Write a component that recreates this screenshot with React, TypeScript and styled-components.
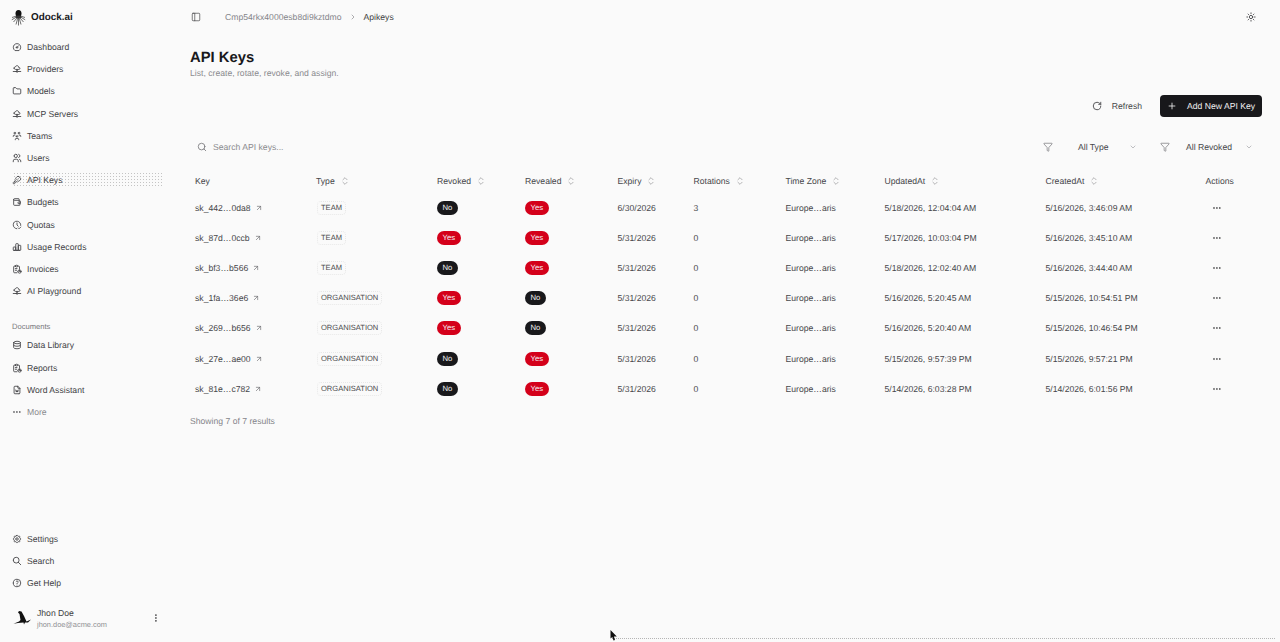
import React from "react";
import styled, { createGlobalStyle } from "styled-components";
import { ArrowUpRight, ChevronDown, ChevronRight, ChevronsUpDown, Funnel, PanelLeft, Plus, RotateCw, Search, Sun } from "lucide-react";
import {
  TbCloudDataConnection, TbDashboard, TbFolder, TbUsersGroup, TbUsers, TbKey, TbWallet, TbClockCheck,
  TbChartBar, TbReport, TbDatabase, TbFileWord, TbDots, TbDotsVertical, TbSettings, TbSearch, TbHelp,
} from "react-icons/tb";

const Global = createGlobalStyle`
  html, body { margin: 0; padding: 0; height: 100%; background: #fafafa; }
  body { font-family: "Liberation Sans", Arial, sans-serif; color: #3f3f42; overflow: hidden; text-rendering: geometricPrecision; }
  #root { height: 100%; }
`;

const Page = styled.div`
  position: relative;
  display: flex;
  height: 642px;
  width: 1280px;
  overflow: hidden;
  background: #fafafa;
`;

const Sidebar = styled.aside`
  width: 190px;
  flex: none;
  display: flex;
  flex-direction: column;
  padding: 0 27px 0 10px;
  box-sizing: border-box;
`;

const Brand = styled.div`
  height: 34px;
  display: flex;
  align-items: center;
  gap: 5px;
  padding-left: 1px;
  font-size: 9.9px;
  font-weight: 700;
  color: #18181b;
  margin-bottom: 2px;
`;

const NavList = styled.nav`
  display: flex;
  flex-direction: column;
`;

const BottomNav = styled(NavList)`
  margin-top: auto;
`;

const NavItem = styled.div<{ $active?: boolean; $muted?: boolean }>`
  height: 22.2px;
  box-sizing: border-box;
  padding: 4px 0 4px 2px;
  display: flex;
  align-items: center;
  gap: 5px;
  font-size: 8.65px;
  color: ${(p) => (p.$muted ? "#8b8b8f" : "#434346")};
  background-image: ${(p) => (p.$active ? "radial-gradient(circle, #c4c4c4 0.5px, transparent 0.65px)" : "none")};
  background-size: 3px 3px;
  background-clip: content-box;
  svg { flex: none; color: #3c3c40; }
`;

const GroupLabel = styled.div`
  margin-top: 16px;
  height: 16px;
  display: flex;
  align-items: center;
  padding-left: 2px;
  font-size: 7.6px;
  color: #77777b;
`;

const UserRow = styled.div`
  height: 36px;
  margin: 6px 0;
  display: flex;
  align-items: center;
  padding: 0 2px 0 3px;
`;

const UserText = styled.div`
  display: flex;
  flex-direction: column;
  gap: 2px;
  margin-left: 4px;
  flex: 1;
`;

const UserName = styled.span`
  font-size: 8.65px;
  color: #3f3f42;
`;

const UserMail = styled.span`
  font-size: 7.4px;
  color: #909094;
`;

const Main = styled.main`
  flex: 1;
  min-width: 0;
  display: flex;
  flex-direction: column;
  padding-right: 18px;
`;

const Header = styled.header`
  height: 34px;
  display: flex;
  align-items: center;
  font-size: 8.65px;
  padding-left: 1px;
`;

const Crumbs = styled.div`
  display: flex;
  align-items: center;
  gap: 7px;
  margin-left: 24px;
  flex: 1;
`;

const CrumbMuted = styled.span`
  color: #85858a;
`;

const CrumbCurrent = styled.span`
  color: #3f3f42;
`;

const Title = styled.h1`
  margin: 15px 0 0;
  font-size: 14.8px;
  line-height: 18px;
  font-weight: 700;
  color: #18181b;
`;

const Subtitle = styled.p`
  margin: 0;
  font-size: 8.65px;
  line-height: 12px;
  color: #8b8b8f;
`;

const Actions = styled.div`
  margin-top: 16px;
  display: flex;
  justify-content: flex-end;
  align-items: center;
`;

const RefreshButton = styled.div`
  display: flex;
  align-items: center;
  gap: 10px;
  font-size: 8.65px;
  color: #47474a;
  margin-right: 18px;
`;

const PrimaryButton = styled.div`
  width: 102px;
  height: 22px;
  box-sizing: border-box;
  display: flex;
  align-items: center;
  gap: 10px;
  padding-left: 7px;
  border-radius: 4px;
  background: #18181b;
  color: #efeff0;
  font-size: 8.65px;
`;

const Toolbar = styled.div`
  margin-top: 18px;
  height: 24px;
  display: flex;
  align-items: center;
`;

const SearchBox = styled.div`
  flex: 1;
  display: flex;
  align-items: center;
  gap: 6px;
  padding-left: 7px;
  font-size: 8.65px;
  color: #8b8b8f;
`;

const FilterSelect = styled.div<{ $w: number; $gap: number; $end: number }>`
  width: ${(p) => p.$w}px;
  margin-right: ${(p) => p.$end}px;
  display: flex;
  align-items: center;
  font-size: 8.65px;
  color: #47474a;
  svg:first-child { margin-right: ${(p) => p.$gap}px; color: #5a5a5e; }
  svg:last-child { margin-left: auto; color: #a0a0a4; }
`;

const Table = styled.table`
  margin-top: 9px;
  width: 1072px;
  table-layout: fixed;
  border-collapse: collapse;
`;

const Col = styled.col<{ $w: number }>`
  width: ${(p) => p.$w}px;
`;

const Th = styled.th`
  height: 25px;
  padding: 0 0 0 5px;
  text-align: left;
  font-size: 8.65px;
  font-weight: 400;
  color: #47474a;
`;

const ThInner = styled.span`
  display: inline-flex;
  align-items: center;
  gap: 5px;
  svg { color: #77777b; }
`;

const Td = styled.td`
  height: 30.1px;
  padding: 0 0 0 5px;
  font-size: 8.65px;
  color: #47474a;
  white-space: nowrap;
`;

const KeyCell = styled.span`
  display: inline-flex;
  align-items: center;
  gap: 4px;
  svg { color: #6a6a6e; }
`;

const TypeTag = styled.span`
  display: inline-block;
  margin-left: 1px;
  padding: 1px 3px 1px 3px;
  font-size: 7.55px;
  line-height: 10px;
  color: #4a4a4d;
  border: 1px dotted #e8e8e8;
  border-radius: 4px;
`;

const Pill = styled.span<{ $yes: boolean }>`
  display: inline-block;
  padding: 0 5.5px;
  height: 14px;
  line-height: 14px;
  border-radius: 7px;
  font-size: 7.7px;
  color: #f4f4f5;
  background: ${(p) => (p.$yes ? "#d4001a" : "#18181b")};
`;

const RowMenu = styled.span`
  display: flex;
  padding-left: 6px;
  color: #2a2a2d;
`;

const ResultCount = styled.div`
  margin-top: 10px;
  font-size: 8.65px;
  line-height: 14px;
  color: #85858a;
`;

const DottedTrail = styled.div`
  position: absolute;
  left: 612px;
  right: 5px;
  top: 638px;
  border-top: 1px dotted #b5b5b5;
`;

const Cursor = styled.svg`
  position: absolute;
  left: 610px;
  top: 630px;
`;

const Cloud = TbCloudDataConnection;

const LogoMark = () => (
  <svg width="15" height="17" viewBox="0 0 15 17" fill="none" stroke="#333" strokeWidth="0.7">
    <ellipse cx="7.5" cy="4.5" rx="3" ry="3.6" fill="#111" stroke="none" />
    <path d="M5.5 7 L1 8.5M5.5 8 L0.8 10.8M6 9 L2.5 13M6.8 9 L5 15.5M7.5 9 L7.5 16.5M8.2 9 L10 15.5M9 9 L12.5 13M9.5 8 L14.2 10.8M9.5 7 L14 8.5" />
    <ellipse cx="7.5" cy="8" rx="3" ry="1.4" fill="#333" stroke="none" />
  </svg>
);

const Avatar = () => (
  <svg width="20" height="16" viewBox="0 0 20 16">
    <path d="M6 1 L8.5 1.5 L11 6 L13.5 11.5 L18 9.5 L15 12.5 L12 12.5 L11 14.5 L10.5 12.5 L5 13 L0.5 13.8 L6 11.5 L7.5 10 L6.5 4 L5 2.5 Z" fill="#111" />
  </svg>
);

const topNav: [string, React.ComponentType<{ size?: number }>][] = [
  ["Dashboard", TbDashboard],
  ["Providers", Cloud],
  ["Models", TbFolder],
  ["MCP Servers", Cloud],
  ["Teams", TbUsersGroup],
  ["Users", TbUsers],
  ["API Keys", TbKey],
  ["Budgets", TbWallet],
  ["Quotas", TbClockCheck],
  ["Usage Records", TbChartBar],
  ["Invoices", TbReport],
  ["AI Playground", Cloud],
];

const docNav: [string, React.ComponentType<{ size?: number }>][] = [
  ["Data Library", TbDatabase],
  ["Reports", TbReport],
  ["Word Assistant", TbFileWord],
];

const bottomNav: [string, React.ComponentType<{ size?: number }>][] = [
  ["Settings", TbSettings],
  ["Search", TbSearch],
  ["Get Help", TbHelp],
];

const columns: [string, number, boolean][] = [
  ["Key", 121, false],
  ["Type", 121, true],
  ["Revoked", 88, true],
  ["Revealed", 92.5, true],
  ["Expiry", 76, true],
  ["Rotations", 92, true],
  ["Time Zone", 99, true],
  ["UpdatedAt", 161, true],
  ["CreatedAt", 160, true],
  ["Actions", 61.5, false],
];

type Row = [string, string, boolean, boolean, string, string, string, string];
const rows: Row[] = [
  ["sk_442…0da8", "TEAM", false, true, "6/30/2026", "3", "5/18/2026, 12:04:04 AM", "5/16/2026, 3:46:09 AM"],
  ["sk_87d…0ccb", "TEAM", true, true, "5/31/2026", "0", "5/17/2026, 10:03:04 PM", "5/16/2026, 3:45:10 AM"],
  ["sk_bf3…b566", "TEAM", false, true, "5/31/2026", "0", "5/18/2026, 12:02:40 AM", "5/16/2026, 3:44:40 AM"],
  ["sk_1fa…36e6", "ORGANISATION", true, false, "5/31/2026", "0", "5/16/2026, 5:20:45 AM", "5/15/2026, 10:54:51 PM"],
  ["sk_269…b656", "ORGANISATION", true, false, "5/31/2026", "0", "5/16/2026, 5:20:40 AM", "5/15/2026, 10:46:54 PM"],
  ["sk_27e…ae00", "ORGANISATION", false, true, "5/31/2026", "0", "5/15/2026, 9:57:39 PM", "5/15/2026, 9:57:21 PM"],
  ["sk_81e…c782", "ORGANISATION", false, true, "5/31/2026", "0", "5/14/2026, 6:03:28 PM", "5/14/2026, 6:01:56 PM"],
];

const yn = (v: boolean) => <Pill $yes={v}>{v ? "Yes" : "No"}</Pill>;

export default function App() {
  return (
    <Page>
      <Global />
      <Sidebar>
        <Brand>
          <LogoMark />
          Odock.ai
        </Brand>
        <NavList>
          {topNav.map(([label, Icon]) => (
            <NavItem key={label} $active={label === "API Keys"}>
              <Icon size={10} />
              {label}
            </NavItem>
          ))}
        </NavList>
        <GroupLabel>Documents</GroupLabel>
        <NavList>
          {docNav.map(([label, Icon]) => (
            <NavItem key={label}>
              <Icon size={10} />
              {label}
            </NavItem>
          ))}
          <NavItem $muted>
            <TbDots size={10} />
            More
          </NavItem>
        </NavList>
        <BottomNav>
          {bottomNav.map(([label, Icon]) => (
            <NavItem key={label}>
              <Icon size={10} />
              {label}
            </NavItem>
          ))}
        </BottomNav>
        <UserRow>
          <Avatar />
          <UserText>
            <UserName>Jhon Doe</UserName>
            <UserMail>jhon.doe@acme.com</UserMail>
          </UserText>
          <TbDotsVertical size={10} color="#2a2a2d" />
        </UserRow>
      </Sidebar>
      <Main>
        <Header>
          <PanelLeft size={10} color="#3c3c40" strokeWidth={1.6} />
          <Crumbs>
            <CrumbMuted>Cmp54rkx4000esb8di9kztdmo</CrumbMuted>
            <ChevronRight size={8} color="#85858a" />
            <CrumbCurrent>Apikeys</CrumbCurrent>
          </Crumbs>
          <Sun size={10} color="#3c3c40" style={{ marginRight: 6 }} />
        </Header>
        <Title>API Keys</Title>
        <Subtitle>List, create, rotate, revoke, and assign.</Subtitle>
        <Actions>
          <RefreshButton>
            <RotateCw size={10} color="#3c3c40" />
            Refresh
          </RefreshButton>
          <PrimaryButton>
            <Plus size={10} color="#efeff0" />
            Add New API Key
          </PrimaryButton>
        </Actions>
        <Toolbar>
          <SearchBox>
            <Search size={10} color="#77777b" />
            Search API keys...
          </SearchBox>
          <FilterSelect $w={94} $gap={25} $end={23}>
            <Funnel size={10} strokeWidth={1.4} />
            All Type
            <ChevronDown size={8} />
          </FilterSelect>
          <FilterSelect $w={93} $gap={16} $end={9}>
            <Funnel size={10} strokeWidth={1.4} />
            All Revoked
            <ChevronDown size={8} />
          </FilterSelect>
        </Toolbar>
        <Table>
          <colgroup>
            {columns.map(([name, w]) => (
              <Col key={name} $w={w} />
            ))}
          </colgroup>
          <thead>
            <tr>
              {columns.map(([name, , sortable]) => (
                <Th key={name}>
                  <ThInner>
                    {name}
                    {sortable && <ChevronsUpDown size={10} strokeWidth={1.3} />}
                  </ThInner>
                </Th>
              ))}
            </tr>
          </thead>
          <tbody>
            {rows.map((r) => (
              <tr key={r[0]}>
                <Td>
                  <KeyCell>
                    {r[0]}
                    <ArrowUpRight size={8} />
                  </KeyCell>
                </Td>
                <Td>
                  <TypeTag>{r[1]}</TypeTag>
                </Td>
                <Td>{yn(r[2])}</Td>
                <Td>{yn(r[3])}</Td>
                <Td>{r[4]}</Td>
                <Td>{r[5]}</Td>
                <Td>Europe…aris</Td>
                <Td>{r[6]}</Td>
                <Td>{r[7]}</Td>
                <Td>
                  <RowMenu>
                    <TbDots size={10} />
                  </RowMenu>
                </Td>
              </tr>
            ))}
          </tbody>
        </Table>
        <ResultCount>Showing 7 of 7 results</ResultCount>
      </Main>
      <DottedTrail />
      <Cursor width="8" height="11" viewBox="0 0 8 11">
        <path d="M0.5 0 L0.5 8.5 L2.3 7 L3.5 10.5 L5 10 L3.9 6.6 L6.8 6.4 Z" fill="#111" />
      </Cursor>
    </Page>
  );
}
